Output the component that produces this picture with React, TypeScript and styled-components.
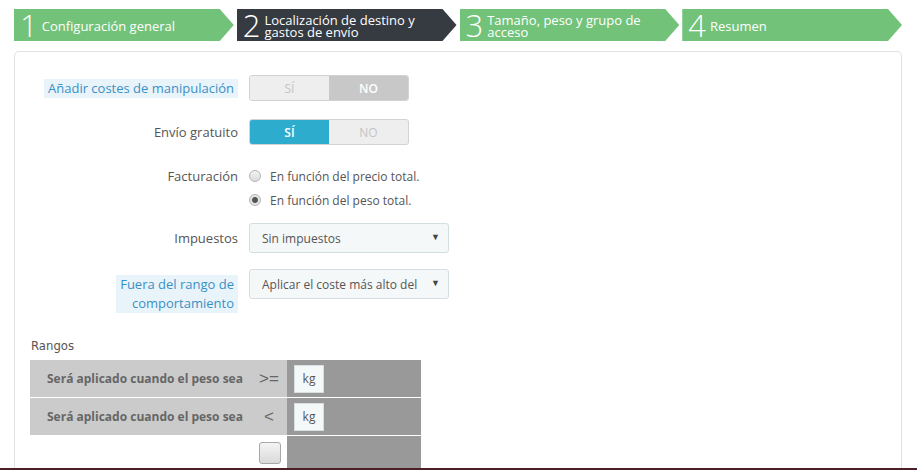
import styled, { createGlobalStyle } from 'styled-components'

const GlobalStyle = createGlobalStyle`
  html, body {
    margin: 0;
    padding: 0;
    background: #fff;
    overflow: hidden;
  }
  body {
    font-family: "Open Sans", "Liberation Sans", sans-serif;
    color: #555;
  }
`

const Page = styled.div`
  padding: 9px 0 0 14px;
`

// Barra de pasos del asistente
const Steps = styled.nav`
  display: grid;
  grid-template-columns: repeat(4, 1fr);
  column-gap: 3px;
  width: 888px;
  height: 32px;
`

const Step = styled.div<{ $active?: boolean }>`
  display: flex;
  align-items: center;
  gap: 4px;
  padding-left: 6px;
  background: ${(p) => (p.$active ? '#363a41' : '#72c279')};
  color: #fff;
  clip-path: polygon(0 0, calc(100% - 14px) 0, 100% 50%, calc(100% - 14px) 100%, 0 100%);
`

const StepNum = styled.span`
  font-size: 31px;
  font-weight: 300;
  line-height: 32px;
`

const StepText = styled.span`
  font-size: 13px;
  line-height: 12px;
  padding-top: 1px;
`

const Panel = styled.section`
  box-sizing: border-box;
  width: 888px;
  margin-top: 10px;
  border: 1px solid #e2e2e2;
  border-radius: 5px;
  padding: 23px 15px 60px;
`

const FormRow = styled.div<{ $mb: number; $top?: boolean }>`
  display: flex;
  align-items: ${(p) => (p.$top ? 'flex-start' : 'center')};
  margin-bottom: ${(p) => p.$mb}px;
`

const LabelCol = styled.div<{ $offset?: number }>`
  flex-shrink: 0;
  width: 208px;
  margin-right: 11px;
  margin-top: ${(p) => p.$offset || 0}px;
  text-align: right;
  font-size: 13px;
  line-height: 24px;
  color: #555;
`

const Hint = styled.span`
  display: inline-block;
  padding: 0 4px;
  line-height: 19px;
  background: #e9f4fa;
  color: #3990c6;
  text-align: right;
`

const Toggle = styled.div`
  display: flex;
  width: 160px;
  height: 26px;
  box-sizing: border-box;
  border: 1px solid #d3d3d3;
  border-radius: 3px;
  overflow: hidden;
  background: #eee;
`

const ToggleHalf = styled.span<{ $on?: boolean; $color?: string }>`
  flex: 1;
  display: flex;
  align-items: center;
  justify-content: center;
  font-size: 12px;
  font-weight: ${(p) => (p.$on ? 600 : 400)};
  color: ${(p) => (p.$on ? '#fff' : '#c4c4c4')};
  background: ${(p) => (p.$on ? p.$color : '#eee')};
`

const RadioList = styled.div`
  display: flex;
  flex-direction: column;
  padding-top: 1px;
`

const RadioItem = styled.label`
  display: flex;
  align-items: center;
  gap: 9px;
  height: 24px;
  font-size: 12px;
  color: #555;
`

const RadioDot = styled.span<{ $checked?: boolean }>`
  box-sizing: border-box;
  width: 12px;
  height: 12px;
  border-radius: 50%;
  border: 1px solid #b5b5b5;
  background: ${(p) =>
    p.$checked
      ? 'radial-gradient(circle, #555 0 2.5px, #e4e4e4 3.5px)'
      : 'linear-gradient(#f2f2f2, #dcdcdc)'};
`

const Select = styled.div`
  box-sizing: border-box;
  display: flex;
  align-items: center;
  width: 200px;
  height: 30px;
  padding: 0 8px 0 12px;
  border: 1px solid #d4dde0;
  border-radius: 3px;
  background: #f5f8f9;
  font-size: 12px;
  color: #555;
`

const SelectValue = styled.span`
  flex: 1;
  overflow: hidden;
  white-space: nowrap;
  margin-right: 12px;
`

const Caret = styled.span`
  font-size: 9px;
  color: #444;
  margin-top: -3px;
`

const Heading = styled.h3`
  margin: 23px 0 6px 1px;
  font-family: "DejaVu Sans Condensed", "DejaVu Sans", sans-serif;
  font-stretch: condensed;
  font-weight: 400;
  font-size: 13px;
  line-height: 16px;
  color: #555;
`

const RangeTable = styled.div`
  display: grid;
  grid-template-columns: 257px 134px;
  grid-auto-rows: 37px;
  row-gap: 1px;
`

const Cell = styled.div<{ $tone: 'light' | 'dark' | 'blank' }>`
  display: flex;
  align-items: center;
  background: ${(p) =>
    p.$tone === 'light' ? '#cbcbcb' : p.$tone === 'dark' ? '#999' : '#fff'};
`

const CondCell = styled(Cell)`
  justify-content: space-between;
  padding: 0 6px 0 17px;
`

const CondText = styled.span`
  font-size: 12px;
  font-weight: 700;
  color: #666;
`

const Symbol = styled.span`
  width: 24px;
  text-align: center;
  font-family: "Liberation Sans", sans-serif;
  font-size: 17px;
  color: #666;
`

const KgBox = styled.span`
  box-sizing: border-box;
  display: flex;
  align-items: center;
  justify-content: center;
  width: 30px;
  height: 28px;
  margin-left: 7px;
  border: 1px solid #d8dfe1;
  background: #f5f8f9;
  font-size: 12px;
  color: #555;
`

const Check = styled.span`
  box-sizing: border-box;
  width: 22px;
  height: 22px;
  margin-top: 6px;
  border: 1px solid #a8a8a8;
  border-radius: 3px;
  background: linear-gradient(#f4f4f4, #dadada);
`

const BottomLine = styled.div`
  position: fixed;
  left: 0;
  right: 0;
  bottom: 0;
  height: 2px;
  background: #4a1f26;
`

const steps = [
  { n: 1, text: 'Configuración general' },
  { n: 2, text: ['Localización de destino y', 'gastos de envío'], active: true },
  { n: 3, text: ['Tamaño, peso y grupo de', 'acceso'] },
  { n: 4, text: 'Resumen' },
]

export default function App() {
  return (
    <Page>
      <GlobalStyle />
      <Steps>
        {steps.map((s) => (
          <Step key={s.n} $active={s.active}>
            <StepNum>{s.n}</StepNum>
            <StepText>
              {Array.isArray(s.text) ? (
                <>
                  {s.text[0]}
                  <br />
                  {s.text[1]}
                </>
              ) : (
                s.text
              )}
            </StepText>
          </Step>
        ))}
      </Steps>
      <Panel>
        <FormRow $mb={18}>
          <LabelCol>
            <Hint>Añadir costes de manipulación</Hint>
          </LabelCol>
          <Toggle>
            <ToggleHalf>SÍ</ToggleHalf>
            <ToggleHalf $on $color="#c8c8c8">NO</ToggleHalf>
          </Toggle>
        </FormRow>
        <FormRow $mb={18}>
          <LabelCol>Envío gratuito</LabelCol>
          <Toggle>
            <ToggleHalf $on $color="#2eacce">SÍ</ToggleHalf>
            <ToggleHalf>NO</ToggleHalf>
          </Toggle>
        </FormRow>
        <FormRow $mb={11} $top>
          <LabelCol $offset={1}>Facturación</LabelCol>
          <RadioList>
            <RadioItem>
              <RadioDot />
              En función del precio total.
            </RadioItem>
            <RadioItem>
              <RadioDot $checked />
              En función del peso total.
            </RadioItem>
          </RadioList>
        </FormRow>
        <FormRow $mb={16}>
          <LabelCol>Impuestos</LabelCol>
          <Select>
            <SelectValue>Sin impuestos</SelectValue>
            <Caret>▼</Caret>
          </Select>
        </FormRow>
        <FormRow $mb={0} $top>
          <LabelCol $offset={6}>
            <Hint>
              Fuera del rango de
              <br />
              comportamiento
            </Hint>
          </LabelCol>
          <Select>
            <SelectValue>Aplicar el coste más alto del rango definido</SelectValue>
            <Caret>▼</Caret>
          </Select>
        </FormRow>
        <Heading>Rangos</Heading>
        <RangeTable>
          <CondCell $tone="light">
            <CondText>Será aplicado cuando el peso sea</CondText>
            <Symbol>&gt;=</Symbol>
          </CondCell>
          <Cell $tone="dark">
            <KgBox>kg</KgBox>
          </Cell>
          <CondCell $tone="light">
            <CondText>Será aplicado cuando el peso sea</CondText>
            <Symbol>&lt;</Symbol>
          </CondCell>
          <Cell $tone="dark">
            <KgBox>kg</KgBox>
          </Cell>
          <CondCell $tone="blank" style={{ alignItems: 'flex-start' }}>
            <span />
            <Check />
          </CondCell>
          <Cell $tone="dark" />
        </RangeTable>
      </Panel>
      <BottomLine />
    </Page>
  )
}
